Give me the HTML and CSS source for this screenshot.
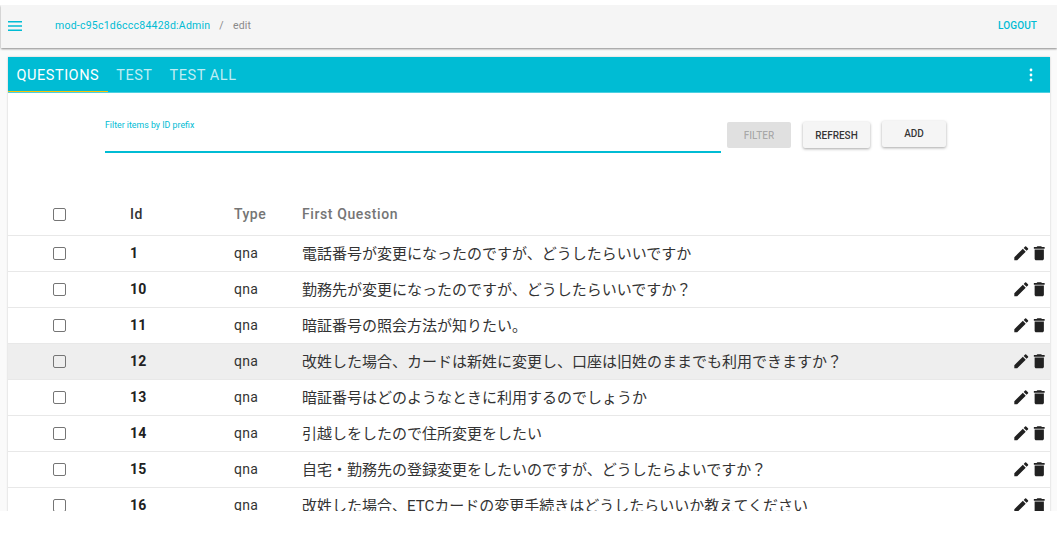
FILE: index.html
```html
<!DOCTYPE html>
<html lang="ja">
<head>
<meta charset="utf-8">
<title>edit</title>
<link rel="stylesheet" href="styles.css">
</head>
<body>
<svg class="defs" width="0" height="0" aria-hidden="true">
  <symbol id="i-edit" viewBox="0 0 24 24"><path d="M3 17.25V21h3.75L17.81 9.94l-3.75-3.75L3 17.25zM20.71 7.04a1 1 0 0 0 0-1.41l-2.34-2.34a1 1 0 0 0-1.41 0l-1.83 1.83 3.75 3.75 1.83-1.83z"/></symbol>
  <symbol id="i-del" viewBox="0 0 24 24"><path d="M6 19c0 1.1.9 2 2 2h8c1.100 0 2-.9 2-2V7H6v12zM19 4h-3.500l-1-1h-5l-1 1H5v2h14V4z"/></symbol>
</svg>
<div class="page">
  <header class="topbar">
    <svg class="menu" viewBox="0 0 14 10"><path d="M0 0h14v1.500H0zM0 4.200h14v1.500H0zM0 8.500h14V10H0z"/></svg>
    <a class="crumb">mod-c95c1d6ccc84428d:Admin</a>
    <span class="sep">/</span>
    <span class="crumb-cur">edit</span>
    <a class="logout">LOGOUT</a>
  </header>
  <main class="card">
    <nav class="tabs">
      <span class="tab active">QUESTIONS</span>
      <span class="tab">TEST</span>
      <span class="tab">TEST ALL</span>
      <svg class="more" viewBox="0 0 4 14"><circle cx="2" cy="2" r="1.400"/><circle cx="2" cy="7" r="1.400"/><circle cx="2" cy="12" r="1.400"/></svg>
    </nav>
    <section class="filter">
      <div class="field">
        <label class="field-label">Filter items by ID prefix</label>
      </div>
      <button class="btn disabled">FILTER</button>
      <button class="btn raised refresh">REFRESH</button>
      <button class="btn raised add">ADD</button>
    </section>
    <div class="table">
      <div class="row head">
        <span class="check"></span><span class="id">Id</span><span>Type</span><span class="q">First Question</span><span></span>
      </div>
      <div class="row"><span class="check"></span><span class="id">1</span><span>qna</span><span class="q">電話番号が変更になったのですが、どうしたらいいですか</span><span class="acts"><svg><use href="#i-edit"/></svg><svg><use href="#i-del"/></svg></span></div>
      <div class="row"><span class="check"></span><span class="id">10</span><span>qna</span><span class="q">勤務先が変更になったのですが、どうしたらいいですか？</span><span class="acts"><svg><use href="#i-edit"/></svg><svg><use href="#i-del"/></svg></span></div>
      <div class="row"><span class="check"></span><span class="id">11</span><span>qna</span><span class="q">暗証番号の照会方法が知りたい。</span><span class="acts"><svg><use href="#i-edit"/></svg><svg><use href="#i-del"/></svg></span></div>
      <div class="row hover"><span class="check"></span><span class="id">12</span><span>qna</span><span class="q">改姓した場合、カードは新姓に変更し、口座は旧姓のままでも利用できますか？</span><span class="acts"><svg><use href="#i-edit"/></svg><svg><use href="#i-del"/></svg></span></div>
      <div class="row"><span class="check"></span><span class="id">13</span><span>qna</span><span class="q">暗証番号はどのようなときに利用するのでしょうか</span><span class="acts"><svg><use href="#i-edit"/></svg><svg><use href="#i-del"/></svg></span></div>
      <div class="row"><span class="check"></span><span class="id">14</span><span>qna</span><span class="q">引越しをしたので住所変更をしたい</span><span class="acts"><svg><use href="#i-edit"/></svg><svg><use href="#i-del"/></svg></span></div>
      <div class="row"><span class="check"></span><span class="id">15</span><span>qna</span><span class="q">自宅・勤務先の登録変更をしたいのですが、どうしたらよいですか？</span><span class="acts"><svg><use href="#i-edit"/></svg><svg><use href="#i-del"/></svg></span></div>
      <div class="row"><span class="check"></span><span class="id">16</span><span>qna</span><span class="q">改姓した場合、ETCカードの変更手続きはどうしたらいいか教えてください</span><span class="acts"><svg><use href="#i-edit"/></svg><svg><use href="#i-del"/></svg></span></div>
    </div>
  </main>
</div>
</body>
</html>
```
FILE: styles.css
```css
* { box-sizing: border-box; }
html, body { margin: 0; padding: 0; background: #fff; }
body { font-family: Roboto, "Noto Sans CJK JP", sans-serif; color: rgba(0,0,0,.87); }
.defs { display: block; height: 0; }
.page { height: 511px; overflow: hidden; border-top: 5px solid #fff; padding-left: 1px; background: #fafafa; }
.topbar { height: 43px; display: flex; align-items: center; background: #f5f5f5; box-shadow: 0 1px 2px rgba(0,0,0,.45); padding: 0 0 2px 7px; font-size: 10.500px; letter-spacing: .23px; }
.menu { width: 14px; height: 10px; fill: #00bcd4; margin-right: 33px; }
.crumb { color: #00bcd4; }
.sep { color: #888; margin: 0 10px 0 9px; }
.crumb-cur { color: #8a8a8a; letter-spacing: .2px; margin-left: -1px; }
.logout { margin-left: auto; margin-right: 20px; color: #00bcd4; font-weight: 500; font-size: 10px; letter-spacing: .1px; }
.card { margin: 9px 7px 0 7px; background: #fff; box-shadow: 0 0 2px rgba(0,0,0,.2); height: 460px; }
.tabs { height: 36px; padding-top: 1px; background: #00bcd4; display: flex; align-items: stretch; color: rgba(255,255,255,.75); font-size: 14.500px; letter-spacing: .55px; border-bottom: 1px solid #4dd0e1; }
.tab { display: flex; align-items: center; padding: 0 8.500px; }
.tab.active { color: #fff; box-shadow: inset 0 -1px 0 #ffc107; }
.more { width: 4px; height: 14px; fill: #fff; margin: auto 17px auto auto; }
.filter { height: 107px; display: flex; align-items: flex-start; padding: 29px 0 0 97px; }
.field { width: 616px; height: 31px; border-bottom: 2px solid #00bcd4; font-size: 8.800px; color: #00bcd4; flex: none; }
.field-label { display: block; line-height: 10px; margin-top: -2px; }
.btn { border: 0; border-radius: 2px; font-family: inherit; font-weight: 500; font-size: 10px; background: #f5f5f5; color: rgba(0,0,0,.8); padding: 0; height: 26px; flex: none; }
.disabled { background: #e0e0e0; color: rgba(0,0,0,.26); width: 64px; margin: 0 0 0 6px; }
.raised { box-shadow: 0 1px 3px rgba(0,0,0,.35); }
.refresh { width: 67px; margin-left: 12px; }
.add { width: 64px; margin: -1px 0 0 12px; padding-bottom: 1px; }
.table { font-size: 14px; letter-spacing: .3px; }
.row { height: 36px; display: grid; grid-template-columns: 122px 104px 68px 1fr 45px; align-items: center; border-bottom: 1px solid #e8e8e8; padding-bottom: 1px; color: #333; }
.row .q { font-size: 15px; letter-spacing: 0; white-space: nowrap; margin-top: -1px; }
.row.head { font-weight: 500; color: #757575; padding-bottom: 7px; letter-spacing: .5px; }
.row.head .q { font-size: 14px; letter-spacing: .6px; margin-top: 0; }
.row.hover { background: #eee; }
.check { width: 13px; height: 13px; border: 1.500px solid #757575; border-radius: 2px; margin-left: 45px; }
.id { font-weight: 700; color: #212121; }
.head .id { font-weight: 500; color: #333; }
.acts { display: flex; align-items: center; margin-left: 6.500px; }
.acts svg { width: 18.500px; height: 18.500px; fill: #212121; flex: none; }
```
